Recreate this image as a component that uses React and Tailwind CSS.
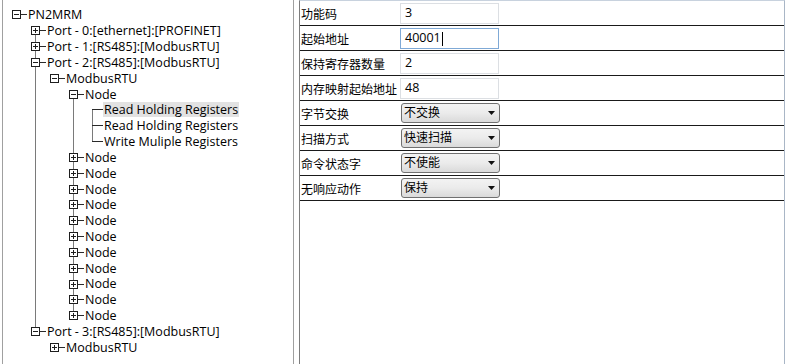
import React from 'react';

const treeRows = [
  { level: 0, kind: 'minus', text: 'PN2MRM' },
  { level: 1, kind: 'plus', text: 'Port - 0:[ethernet]:[PROFINET]' },
  { level: 1, kind: 'plus', text: 'Port - 1:[RS485]:[ModbusRTU]' },
  { level: 1, kind: 'minus', text: 'Port - 2:[RS485]:[ModbusRTU]' },
  { level: 2, kind: 'minus', text: 'ModbusRTU' },
  { level: 3, kind: 'minus', text: 'Node' },
  { level: 4, kind: 'leaf', text: 'Read Holding Registers', selected: true },
  { level: 4, kind: 'leaf', text: 'Read Holding Registers' },
  { level: 4, kind: 'leaf', text: 'Write Muliple Registers' },
  ...Array.from({ length: 11 }, () => ({ level: 3, kind: 'plus', text: 'Node' })),
  { level: 1, kind: 'minus', text: 'Port - 3:[RS485]:[ModbusRTU]' },
  { level: 2, kind: 'plus', text: 'ModbusRTU' },
];

// is there a sibling at `level` after row i (before leaving the parent)?
const siblingAfter = (i, level) => {
  for (let j = i + 1; j < treeRows.length; j++) {
    if (treeRows[j].level < level) return false;
    if (treeRows[j].level === level) return true;
  }
  return false;
};

const siblingBefore = (i, level) => {
  for (let j = i - 1; j >= 0; j--) {
    if (treeRows[j].level < level) return false;
    if (treeRows[j].level === level) return true;
  }
  return false;
};

const lineCls = 'border-l border-[#7a7a7a]';

const ExpandBox = ({ open }) => (
  <svg width="9" height="9" viewBox="0 0 9 9" className="shrink-0 ml-[4px]" shapeRendering="crispEdges">
    <rect x="0.5" y="0.5" width="8" height="8" fill="white" stroke="#1e1e1e" />
    <line x1="2" y1="4.5" x2="7" y2="4.5" stroke="#1e1e1e" />
    {!open && <line x1="4.5" y1="2" x2="4.5" y2="7" stroke="#1e1e1e" />}
  </svg>
);

const TreeRow = ({ row, index }) => {
  const guides = [];
  for (let c = 0; c < row.level; c++) {
    guides.push(
      <div key={c} className="w-[19px] h-full shrink-0">
        {siblingAfter(index, c) && <div className={`ml-[8px] h-full ${lineCls}`} />}
      </div>
    );
  }
  const prev = siblingBefore(index, row.level);
  const next = siblingAfter(index, row.level);

  return (
    <div className="flex items-stretch h-[15.83px]">
      {guides}
      <div className="w-[19px] h-full shrink-0 flex flex-col">
        <div className={`flex-1 ml-[8px] ${prev ? lineCls : ''}`} />
        {row.kind === 'leaf' ? (
          <div className="ml-[8px] h-px bg-[#2a2a2a]" />
        ) : (
          <div className="flex items-center h-[9px]">
            <ExpandBox open={row.kind === 'minus'} />
            <div className="flex-1 h-px bg-[#2a2a2a]" />
          </div>
        )}
        <div className={`flex-1 ml-[8px] ${next ? lineCls : ''}`} />
      </div>
      <div className="flex items-center">
        <span
          className={`px-px leading-[15px] whitespace-nowrap text-[12.5px] text-black ${
            row.selected ? 'bg-[#e2e2e2]' : ''
          }`}
        >
          {row.text}
        </span>
      </div>
    </div>
  );
};

const fields = [
  { label: '功能码', type: 'input', value: '3' },
  { label: '起始地址', type: 'input', value: '40001', focused: true },
  { label: '保持寄存器数量', type: 'input', value: '2' },
  { label: '内存映射起始地址', type: 'input', value: '48' },
  { label: '字节交换', type: 'select', value: '不交换' },
  { label: '扫描方式', type: 'select', value: '快速扫描' },
  { label: '命令状态字', type: 'select', value: '不使能' },
  { label: '无响应动作', type: 'select', value: '保持' },
];

const Arrow = () => (
  <svg width="7" height="4" viewBox="0 0 7 4" className="shrink-0">
    <polygon points="0,0 7,0 3.5,4" fill="#111" />
  </svg>
);

const FieldRow = ({ field }) => (
  <div className="flex h-[25px] border-b border-[#1a1a1a]">
    <div className="w-[100px] shrink-0 flex items-center pt-[3px] pl-px text-[12px] whitespace-nowrap">
      {field.label}
    </div>
    <div className="flex items-end pb-px">
      {field.type === 'input' ? (
        <div
          className={`w-[99px] h-[21px] flex items-center px-[4px] bg-white border ${
            field.focused ? 'border-[#7fa9d6]' : 'border-[#dcdfe3]'
          } text-[12.5px] text-black`}
        >
          <span>{field.value}</span>
          {field.focused && <span className="w-px h-[14px] bg-black ml-px" />}
        </div>
      ) : (
        <div className="ml-px mb-px w-[99px] h-[20px] flex items-center justify-between pl-[2px] pr-[4px] rounded-[3px] border border-[#707070] bg-gradient-to-b from-[#f3f3f3] via-[#ebebeb] to-[#dadada] text-[12px] text-black">
          <span>{field.value}</span>
          <Arrow />
        </div>
      )}
    </div>
  </div>
);

export default function App() {
  return (
    <div
      className="flex w-[786px] h-[364px] bg-white overflow-hidden"
      style={{ fontFamily: '"Open Sans", "Noto Sans CJK SC", sans-serif' }}
    >
      <div className="ml-[2px] w-[292px] h-full shrink-0 border-l border-r border-[#a0a0a0] pt-[7px] pl-[5px]">
        {treeRows.map((row, i) => (
          <TreeRow key={i} row={row} index={i} />
        ))}
      </div>
      <div className="ml-[5px] w-[486px] h-full shrink-0 border-l border-[#7d7d7d] border-r border-r-[#a9b6c6] border-t border-t-[#c8d2de]">
        {fields.map((f) => (
          <FieldRow key={f.label} field={f} />
        ))}
      </div>
    </div>
  );
}
